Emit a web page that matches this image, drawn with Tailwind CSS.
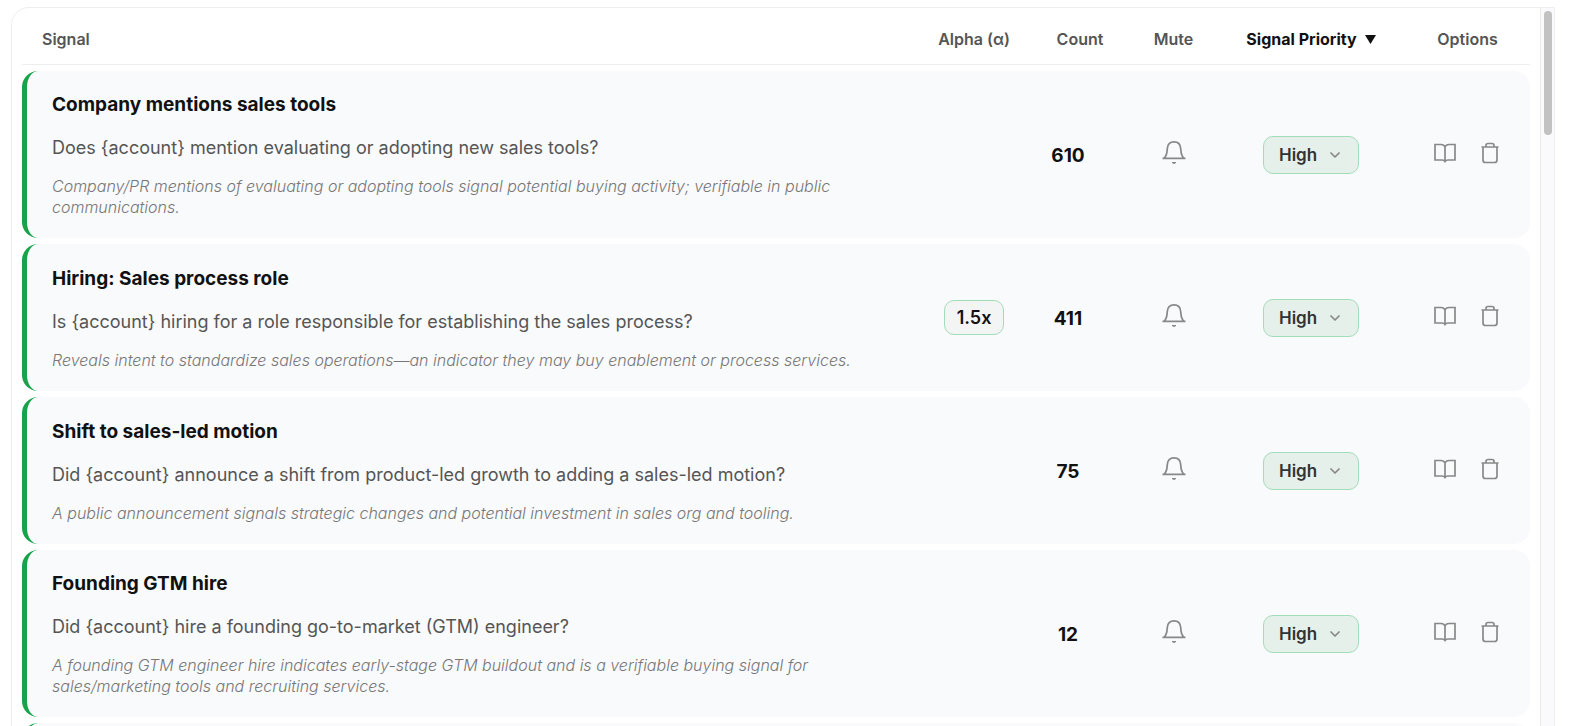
<!DOCTYPE html>
<html lang="en">
<head>
<meta charset="utf-8">
<title>Signals</title>
<script src="https://cdn.jsdelivr.net/npm/@tailwindcss/browser@4"></script>
</head>
<body class="h-screen overflow-hidden bg-white font-['Inter',sans-serif] text-[#111111]">
<svg class="hidden" aria-hidden="true">
  <symbol id="bell" viewBox="0 0 24 24" fill="none" stroke="currentColor" stroke-width="1.7"><path d="M0.5 17.3H23.5M2 17.2C4.6 15.6 5 12.5 5.3 7.6C5.6 3.3 8.2 0.9 12 0.9S18.400 3.300 18.700 7.600C19 12.500 19.400 15.600 22 17.200"/><path d="M10 21.500Q12 23.300 14 21.500Z" fill="currentColor" stroke-width="1"/></symbol>
  <symbol id="book" viewBox="0 0 24 24" fill="none" stroke="currentColor" stroke-width="1.700"><path d="M12 6Q11 3.500 8 3.500H2V19H9Q11 19 12 20.500Q13 19 15 19H22V3.500H16Q13 3.500 12 6ZM12 6V21"/></symbol>
  <symbol id="trash" viewBox="0 0 24 24" fill="none" stroke="currentColor" stroke-width="1.700"><path d="M3.500 6H20.500M8 6V4.500Q8 2.500 10 2.500H14Q16 2.500 16 4.500V6M5 6V19Q5 21.500 7.500 21.500H16.500Q19 21.500 19 19V6"/></symbol>
  <symbol id="chev" viewBox="0 0 12 12" fill="none" stroke="currentColor" stroke-width="1.700" stroke-linecap="round" stroke-linejoin="round"><path d="M2 4L6 8L10 4"/></symbol>
</svg>
<main class="ml-[11px] mr-7 mt-[7px] flex h-full overflow-hidden rounded-tl-[18px] border border-[#eeeeee]">
  <div class="min-w-0 flex-1 overflow-hidden px-2.5">
    <table class="w-full table-fixed border-separate border-spacing-x-0 border-spacing-y-1.5">
      <colgroup><col><col class="w-28"><col class="w-[100px]"><col class="w-[87px]"><col class="w-[188px]"><col class="w-[125px]"></colgroup>
      <thead>
        <tr class="h-[51px] text-base text-[#555555] *:border-b *:border-[#eeeeee] *:p-0 *:font-semibold">
          <th scope="col" class="text-left"><span class="pl-5">Signal</span></th>
          <th scope="col">Alpha (α)</th>
          <th scope="col">Count</th>
          <th scope="col">Mute</th>
          <th scope="col" class="text-[#111111]"><button class="inline-flex items-center gap-2 font-bold">Signal Priority <svg class="h-[9px] w-[11px]" viewBox="0 0 11 9" fill="currentColor" aria-hidden="true"><path d="M0 0H11L5.500 9Z"/></svg></button></th>
          <th scope="col">Options</th>
        </tr>
      </thead>
      <tbody id="rows"></tbody>
    </table>
  </div>
  <div class="w-[14px] border-l border-[#e3f0e8] bg-[#fafafc] pl-[3px] pt-[3px]" aria-hidden="true"><div class="h-[124px] w-2 rounded-full bg-[#c2c2c2]"></div></div>
</main>
<template id="row">
  <tr class="h-[147px] *:bg-[#f9fafc] *:p-0 *:text-center">
    <td class="rounded-l-2xl border-l-5 border-[#16a34a]">
      <div class="pb-5 pl-[25px] pr-5 pt-5 text-left">
        <h2 class="mb-4 text-[19px]/[27px] font-bold"></h2>
        <p class="q mb-[15px] text-lg/[27px] text-[#555555]"></p>
        <p class="d max-w-[800px] text-base/[21px] font-light italic text-[#777777]"></p>
      </div>
    </td>
    <td><span class="alpha inline-block rounded-[10px] border border-[#a3dcb9] bg-[#f3f4f4] px-3 py-1 text-lg/[25px] font-semibold"></span></td>
    <td><div class="count pr-6 pt-1 text-[19px] font-bold"></div></td>
    <td><button class="mx-auto mb-1 block text-[#888888]" aria-label="Mute signal"><svg class="size-6"><use href="#bell"/></svg></button></td>
    <td>
      <div class="relative mx-auto mt-px w-24 text-[#333333]">
        <select aria-label="Signal priority" class="block h-[38px] w-full appearance-none rounded-[10px] border border-[#a3dcb9] bg-[#e6f0ea] pl-[15px] pt-0.5 text-[17px] font-semibold"><option>High</option><option>Medium</option><option>Low</option></select>
        <svg class="pointer-events-none absolute right-[18px] top-[13px] size-3 text-[#888888]" aria-hidden="true"><use href="#chev"/></svg>
      </div>
    </td>
    <td class="rounded-r-2xl">
      <div class="mb-1 flex justify-center gap-[21px] text-[#888888]">
        <button aria-label="View details"><svg class="size-6"><use href="#book"/></svg></button>
        <button aria-label="Delete signal"><svg class="size-6"><use href="#trash"/></svg></button>
      </div>
    </td>
  </tr>
</template>
<script>
const signals = [
  ["Company mentions sales tools", "Does {account} mention evaluating or adopting new sales tools?", "Company/PR mentions of evaluating or adopting tools signal potential buying activity; verifiable in public communications.", "", "610"],
  ["Hiring: Sales process role", "Is {account} hiring for a role responsible for establishing the sales process?", "Reveals intent to standardize sales operations—an indicator they may buy enablement or process services.", "1.5x", "411"],
  ["Shift to sales-led motion", "Did {account} announce a shift from product-led growth to adding a sales-led motion?", "A public announcement signals strategic changes and potential investment in sales org and tooling.", "", "75"],
  ["Founding GTM hire", "Did {account} hire a founding go-to-market (GTM) engineer?", "A founding GTM engineer hire indicates early-stage GTM buildout and is a verifiable buying signal for sales/marketing tools and recruiting services.", "", "12"],
  ["", "", "", "", ""]
];
for (const [title, question, detail, alpha, count] of signals) {
  const row = document.getElementById("row").content.cloneNode(true);
  row.querySelector("h2").textContent = title;
  row.querySelector(".q").textContent = question;
  row.querySelector(".d").textContent = detail;
  row.querySelector(".count").textContent = count;
  if (alpha) row.querySelector(".alpha").textContent = alpha; else row.querySelector(".alpha").remove();
  document.getElementById("rows").append(row);
}
</script>
</body>
</html>
